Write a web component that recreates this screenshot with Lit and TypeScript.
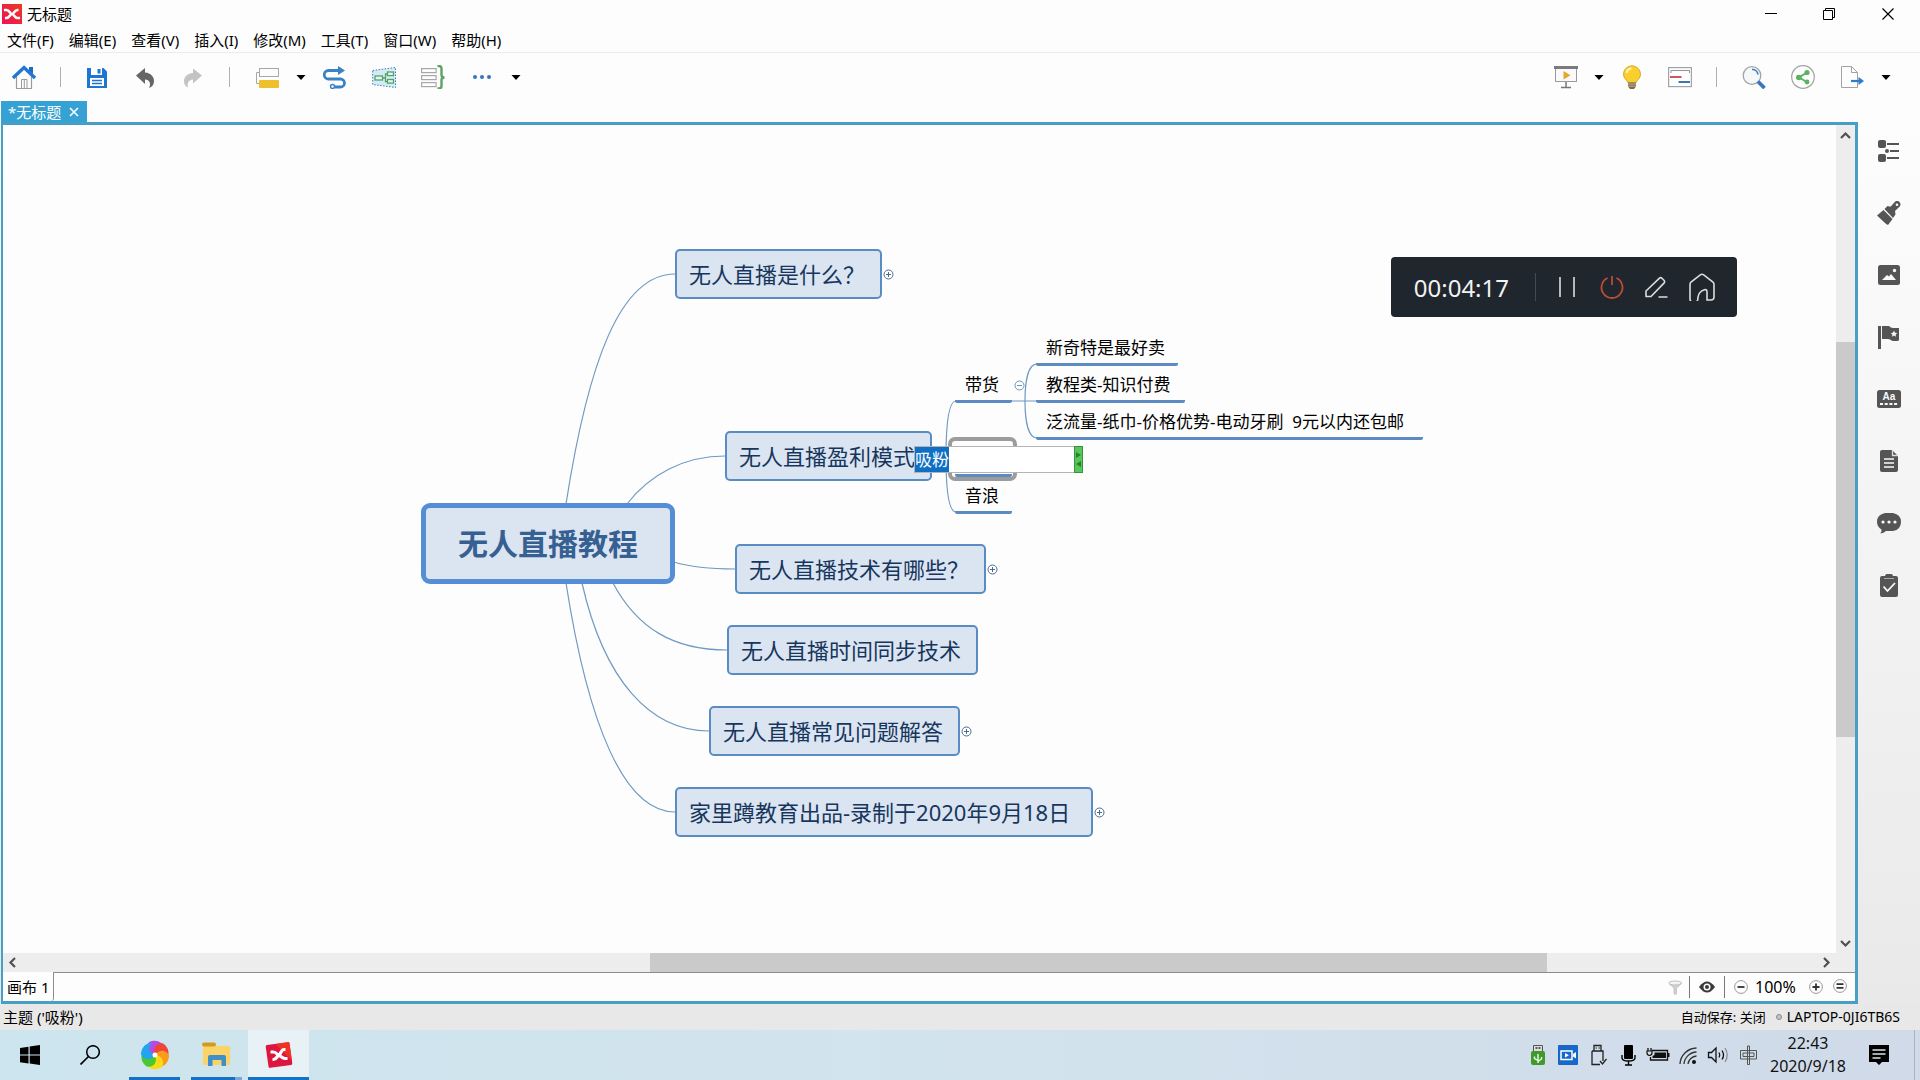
import { LitElement, html, svg, css, nothing, TemplateResult } from "lit";
import { customElement, property } from "lit/decorators.js";
import { styleMap } from "lit/directives/style-map.js";

const icon = (body: unknown, w = 24, h = 24) =>
  html`<svg width=${w} height=${h} viewBox="0 0 ${w} ${h}" fill="none" aria-hidden="true">${body}</svg>`;

const MENUS = ["文件(F)", "编辑(E)", "查看(V)", "插入(I)", "修改(M)", "工具(T)", "窗口(W)", "帮助(H)"];

/* ---------- toolbar icons ---------- */
const I = {
  logo: icon(svg`<defs><linearGradient id="lg" x1="0" y1="1" x2="1" y2="0"><stop offset="0" stop-color="#ef1158"/><stop offset="1" stop-color="#ea3a22"/></linearGradient></defs>
    <rect width="20" height="20" fill="url(#lg)"/>
    <path d="M2 6h2.500c3 0 3.500 4 5.500 4s2.500 4 5.500 4H18M16.500 6h-1c-3 0-3.500 4-5.500 4s-2.500 4-5.500 4H3" stroke="#fff" stroke-width="2.600"/>`, 20, 20),
  home: icon(svg`<path d="M4.500 12v11.500h15V12" stroke="#9b9b9b" stroke-width="1.200" fill="#fdfdfd"/><path d="M9.500 23.500V14.500h5.500v9M12.300 14.500v9" stroke="#9b9b9b"/>
    <path d="M17 2h4v7l-4-3z" fill="#1b6cc4"/><path d="M1 13 12 2.500 23 13" stroke="#2277cf" stroke-width="3.400"/>`),
  save: icon(svg`<path d="M2 3h16.500L22 6.500V23H2z" fill="#1d76d0"/><path d="M6 3h11v7H6z" fill="#fff"/><path d="M12.500 4h3v4.500h-3z" fill="#1d76d0"/><path d="M5 13h14v8H5z" fill="#fff"/><path d="M7 15.500h10M7 18.500h10" stroke="#1d76d0" stroke-width="1.400"/>`),
  undo: icon(svg`<path d="M3 10.500 12 3v4.500c6 .5 9 4.500 9 8.500 0 3.500-1.800 6-5 7 2-3.500 1.500-8-4-8.500V19z" fill="#666"/>`),
  redo: icon(svg`<path d="M21 10.500 12 3.500v4.500c-6 .5-9 4-9 8 0 3.500 1.500 5.500 4 6.500-1-4 0-7.500 5-8V18.500z" fill="#c3c3c3"/>`),
  topic: icon(svg`<rect x="4.500" y="3.500" width="19" height="8" fill="#fcfcfc" stroke="#a7a7a7"/><path d="M4 7.500H1.500v11H4" stroke="#a7a7a7"/><rect x="4" y="15" width="20" height="8" rx="1" fill="#eec02c"/>`),
  relation: icon(svg`<path d="M17 5.500H5.500a4.200 4.200 0 0 0 0 8.500h12a4 4 0 0 1 0 8h-6" stroke="#3b82c4" stroke-width="2.800"/><path d="m15 1 7 4.500-7 4.500z" fill="#3b82c4"/><circle cx="9.500" cy="21.500" r="2" fill="#fff" stroke="#3b82c4" stroke-width="1.500"/>`),
  boundary: icon(svg`<path d="M.7 5.500 23.500 2.500v20L.7 19.500z" fill="#d2ecf6" stroke="#3d7fb0" stroke-dasharray="1.500 1.500"/><g fill="#e7f7ee" stroke="#56a169" stroke-width="1.300"><rect x="3" y="11" width="7.500" height="4"/><rect x="15.500" y="7" width="6" height="3.600"/><rect x="15.500" y="14.500" width="6" height="3.600"/></g><path d="M10.500 13h3M15.500 9h-2v7.500h2" stroke="#56a169" stroke-width="1.300"/>`),
  summary: icon(svg`<g stroke="#a7a7a7" stroke-width="1.200" fill="#fdfdfd"><rect x=".6" y="3.600" width="14.500" height="4"/><rect x=".6" y="10.600" width="14.500" height="4"/><rect x=".6" y="17.600" width="14.500" height="4"/></g><path d="M16.500 1H18q2.500 0 2.500 2.500V10q0 2.500 3 2.500-3 0-3 2.500v6q0 2.500-2.500 2.500h-1.500" stroke="#5fa162" stroke-width="2.400"/>`),
  more: icon(svg`<g fill="#3277bd"><circle cx="5" cy="12" r="2"/><circle cx="12" cy="12" r="2"/><circle cx="19" cy="12" r="2"/></g>`),
  present: icon(svg`<rect x="1.500" y="3" width="21" height="13.500" fill="#fafafa" stroke="#9a9a9a"/><path d="M0 1h24v3H0z" fill="#7b7b7b"/><path d="m9.500 6 7 4.200-7 4.200z" fill="#e5a62e"/><path d="M12 17v5M7 22.500h10" stroke="#777" stroke-width="1.500"/>`),
  bulb: icon(svg`<path d="M12 .8a8.500 8.500 0 0 1 8.500 8.500c0 4-3 5-4.300 8.200H7.800C6.500 14.300 3.500 13.300 3.500 9.300A8.500 8.500 0 0 1 12 .8z" fill="#f9cf2e" stroke="#d9a927"/><path d="M6.500 8a5.500 5.500 0 0 1 5-4.500" stroke="#fdf0a8" stroke-width="2.400"/><path d="M8 17.500h8v4l-2 2.500h-4l-2-2.500z" fill="#7a6a50"/><path d="M8 19h8M8 21.200h8" stroke="#c6b68d"/>`),
  gantt: icon(svg`<rect x=".6" y="2.600" width="22.800" height="19" fill="#fdfdfd" stroke="#9fa3ab" stroke-width="1.200"/><path d="M3 8V5.500h18.500V8" stroke="#9b8f93"/><path d="M2 12h11.500" stroke="#cf5560" stroke-width="2"/><path d="M10.500 17h11.500" stroke="#3d75b5" stroke-width="2"/>`),
  search: icon(svg`<circle cx="10" cy="10.500" r="8.800" fill="#f5f8fb" stroke="#a3a3a3" stroke-width="1.300"/><path d="M10 4.200a6.500 6.500 0 0 1 6 5.500" stroke="#3b82c4" stroke-width="1.500"/><path d="m16 16.500 6.500 6.500" stroke="#3578be" stroke-width="3.800"/>`),
  share: icon(svg`<circle cx="12" cy="12" r="11.300" fill="#fdfdfd" stroke="#a3a3a3" stroke-width="1.200"/><path d="M16 7.500 8 12.500l8 4.500" stroke="#5cb25f" stroke-width="2"/><g fill="#5cb25f"><circle cx="16" cy="7.500" r="2.600"/><circle cx="7.800" cy="12.500" r="2.800"/><circle cx="16" cy="17" r="2.400"/></g>`),
  exportDoc: icon(svg`<path d="M1.500 1.500h10l6 6v15h-16zM11.500 1.500v6h6" fill="#fdfdfd" stroke="#a3a3a3"/><path d="M11 16h9" stroke="#2f7cc9" stroke-width="2.200"/><path d="m18.500 12 5.500 4-5.500 4z" fill="#2f7cc9"/>`),
  caret: icon(svg`<path d="M.5 0h9L5 5z" fill="#000"/>`, 10, 5),
};

const G = "#555";
const SIDE: [string, TemplateResult][] = [
  ["大纲", icon(svg`<g fill=${G}><rect x="1" y="1" width="8" height="8" rx="2"/><rect x="1" y="15" width="8" height="8" rx="2"/><circle cx="10" cy="12" r="2"/></g><path d="M10 5h12M13 12h9M10 19h12" stroke=${G} stroke-width="2"/>`)],
  ["格式", icon(svg`<path d="M0 14.500 6.500 9l9 9L11 24q-2-1-3.500-2.500L0 14.500zM7.500 8l3-3 3 .8L18 .8q2.500-2 4.500.2t.2 4.500L18 10l.5 3.500-2.500 3.500z" fill=${G}/><circle cx="20" cy="3.800" r="1.300" fill="#fafafa"/>`)],
  ["图片", icon(svg`<rect x="1" y="2" width="22" height="20" rx="2.500" fill=${G}/><path d="m5 17 5-5 2 1.500 2-2.500 5 6z" fill="#fafafa"/><circle cx="17.500" cy="7.500" r="1.700" fill="#fafafa"/>`)],
  ["图标", icon(svg`<path d="M1 1h3v23H1zM5 1h7q2 2.500 5 2h5v12.500q-4 1-7 .2-2-1.700-4-1.700H5z" fill=${G}/><path d="m17 5.500 1 2.200 2.300.2-1.700 1.600.5 2.300-2.100-1.200-2.100 1.200.5-2.300-1.700-1.600 2.300-.2z" fill="#fafafa"/>`)],
  ["标签", icon(svg`<rect x="0" y="3" width="24" height="18" rx="2.500" fill=${G}/><text x="12" y="13" text-anchor="middle" font-size="10" font-weight="700" font-family="Liberation Sans, sans-serif" fill="#fafafa">Aa</text><path d="M3 17h18" stroke="#fafafa" stroke-width="2" stroke-dasharray="3 1.700"/>`)],
  ["备注", icon(svg`<path d="M3 3q0-2 2-2h10l6 6v14q0 2-2 2H5q-2 0-2-2z" fill=${G}/><path d="M15.500 1v5.500H21" stroke="#ddd" stroke-width="1.300"/><path d="M7 10h10M7 14h10M7 18h10" stroke="#fafafa" stroke-width="1.400"/>`)],
  ["批注", icon(svg`<path d="M8 2h8q8 1.500 8 9t-8 9H9q-2 2-6 2.500 2-2 1.500-4Q0 16 0 11q0-7.500 8-9z" fill=${G}/><g fill="#fafafa"><circle cx="6" cy="11" r="1.600"/><circle cx="12" cy="11" r="1.600"/><circle cx="18" cy="11" r="1.600"/></g>`)],
  ["任务", icon(svg`<path d="M5 3h3q0-2 2-2h4q2 0 2 2h3q2 0 2 2v17q0 2-2 2H5q-2 0-2-2V5q0-2 2-2z" fill=${G}/><path d="M7 5.500h10" stroke="#aaa"/><path d="m6.500 13.500 4 4.500 7.500-8" stroke="#fafafa" stroke-width="1.800"/>`)],
];

/* ---------- mind map data, in sheet coordinates ---------- */
const VIEW = { x: 3, y: 125 };
const at = (x: number, y: number, w?: number) =>
  styleMap({ left: `${x - VIEW.x}px`, top: `${y - VIEW.y}px`, ...(w ? { width: `${w}px` } : {}) });

interface Topic { x: number; y: number; w: number; label: string; folded?: boolean }
const TOPICS: Topic[] = [
  { x: 675, y: 249, w: 207, label: "无人直播是什么？", folded: true },
  { x: 725, y: 431, w: 207, label: "无人直播盈利模式" },
  { x: 735, y: 544, w: 251, label: "无人直播技术有哪些？", folded: true },
  { x: 727, y: 625, w: 251, label: "无人直播时间同步技术" },
  { x: 709, y: 706, w: 251, label: "无人直播常见问题解答", folded: true },
  { x: 675, y: 787, w: 418, label: "家里蹲教育出品-录制于2020年9月18日", folded: true },
];
const SUBTOPICS: Topic[] = [
  { x: 955, y: 370, w: 57, label: "带货" },
  { x: 955, y: 444, w: 57, label: "" },
  { x: 955, y: 481, w: 57, label: "音浪" },
  { x: 1036, y: 333, w: 142, label: "新奇特是最好卖" },
  { x: 1036, y: 370, w: 149, label: "教程类-知识付费" },
  { x: 1036, y: 407, w: 387, label: "泛流量-纸巾-价格优势-电动牙刷  9元以内还包邮" },
];
const LINKS = [
  "M566 504C588 363 620 274 675 274",
  "M627 504C650 474 685 456 725 456",
  "M674 562C690 567 710 569 735 569",
  "M613 583C637 628 673 650 727 650",
  "M582 583C604 680 650 731 709 731",
  "M566 583C588 724 624 812 675 812",
  "M932 457H946M956 401C948 401 946 430 946 457S948 512 956 512",
  "M1011 401H1037M1037 364C1028 364 1025 382 1025 401S1028 438 1037 438",
];

@customElement("mind-map")
class MindMap extends LitElement {
  static styles = css`
    :host { display: block; position: relative; flex: 1; min-width: 0; overflow: hidden; background: #fdfdfd; }
    .links { position: absolute; inset: 0; width: 100%; height: 100%; }
    .topic, .sub, .root, .fold, .focus, .editor { position: absolute; box-sizing: border-box; }
    .topic, .sub { white-space: pre; }
    .topic { height: 50px; padding: 0 12px; border: 2px solid #5a8cc4; border-radius: 5px; background: #dbe5f1; color: #17365d; font-size: 22px; line-height: 46px; }
    .root { height: 81px; border: 5px solid #558ed5; border-radius: 9px; background: #dbe5f1; color: #376092; font-size: 30px; font-weight: 700; line-height: 72px; text-align: center; }
    .sub { height: 33px; padding-left: 10px; border-bottom: 3px solid #5b8bc0; border-radius: 0 0 2px 2px; color: #000; font-size: 17px; line-height: 30px; }
    .fold { width: 11px; height: 11px; padding: 0; border: 0; background: none; line-height: 0; }
    .fold svg { display: block; }
    .focus { height: 44px; border: 4px solid #9c9c9c; border-radius: 7px; }
    .editor { display: flex; height: 27px; border: 1px solid #b4b4b4; background: #fff; }
    .editor input { flex: 1; min-width: 0; height: 25px; padding: 0; border: 0; outline: 0; background: none; color: #000; font: inherit; font-size: 17px; line-height: 25px; }
    .editor input::selection { background: #0f6fc5; color: #fff; }
    .grip { display: flex; flex-direction: column; align-items: center; justify-content: center; width: 9px; margin: -1px; padding: 0; border: 1px solid #3a9140; background: #55c858; }
  `;
  firstUpdated() {
    const field = this.renderRoot.querySelector("input")!;
    field.focus();
    field.select();
  }
  fold(x: number, y: number, open: boolean) {
    const c = open ? "#6c93bd" : "#4b6a8f";
    return html`<button class="fold" aria-label=${open ? "折叠" : "展开"} style=${at(x, y)}>
      ${icon(svg`<circle cx="5.500" cy="5.500" r="4.500" fill="#fff" stroke=${c}/><path d=${open ? "M3 5.500h5" : "M3 5.500h5M5.500 3v5"} stroke=${c}/>`, 11, 11)}
    </button>`;
  }
  render() {
    return html`
      <svg class="links" fill="none" stroke="#6f9ac2" stroke-width="1.200" aria-hidden="true">
        <g transform="translate(${-VIEW.x} ${-VIEW.y})">${LINKS.map((d) => svg`<path d=${d}/>`)}</g>
      </svg>
      <div class="root" style=${at(421, 503, 254)}>无人直播教程</div>
      ${TOPICS.map((t) => html`<div class="topic" style=${at(t.x, t.y, t.w)}>${t.label}</div>
        ${t.folded ? this.fold(t.x + t.w + 1, t.y + 20, false) : nothing}`)}
      ${SUBTOPICS.map((t) => html`<div class="sub" style=${at(t.x, t.y, t.w)}>${t.label}</div>`)}
      ${this.fold(1014, 380, true)}
      <div class="focus" style=${at(948, 437, 69)}></div>
      <div class="editor" style=${at(914, 446, 169)}>
        <input aria-label="主题文本" .value=${"吸粉"} />
        <button class="grip" aria-label="调整宽度">${icon(svg`<path d="m1 5 5 3-5 3zM6 14l-5 3 5 3z" fill="#2f7d35"/>`, 7, 25)}</button>
      </div>`;
  }
}

@customElement("recorder-bar")
class RecorderBar extends LitElement {
  static styles = css`
    :host { display: flex; align-items: center; box-sizing: border-box; height: 60px; padding: 0 21px 0 23px; border-radius: 4px; background: #1f262d; color: #f2f2f2; }
    time { font-size: 24px; line-height: 32px; padding-top: 2px; }
    .line { width: 1px; height: 28px; margin: 0 17px 0 26px; background: #434a51; }
    .tools { display: flex; gap: 17px; }
    button { padding: 0; border: 0; background: none; line-height: 0; }
  `;
  render() {
    return html`<time>00:04:17</time><span class="line"></span>
      <div class="tools">
        <button aria-label="暂停">${icon(svg`<path d="M7 4v20M21 4v20" stroke="#dcdcdc" stroke-width="1.600"/>`, 28, 28)}</button>
        <button aria-label="停止">${icon(svg`<path d="M9.500 5a10.500 10.500 0 1 0 9 0" stroke="#bf4a36" stroke-width="1.800"/><path d="M14 3v9" stroke="#bf4a36" stroke-width="1.800"/>`, 28, 28)}</button>
        <button aria-label="画笔">${icon(svg`<path d="M3 23.500v-5.500L16.500 5.200q1.200-1 2.400 0l2.300 2.300q1 1.200 0 2.400L8 23.500zM15.500 24h9" stroke="#dcdcdc" stroke-width="1.600" stroke-linejoin="round"/>`, 28, 28)}</button>
        <button aria-label="主页">${icon(svg`<path d="M2 11.500q0-1.500 1-2.300l9.300-7.400q1.700-1.200 3.400 0L25 9.200q1 .8 1 2.300V24q0 3-3 3h-4v-8q0-3-2.500-2.200-6 2-6.500 7.500 0 4.700-2.500 4.700H5q-3 0-3-3z" stroke="#dcdcdc" stroke-width="1.600"/>`, 28, 28)}</button>
      </div>`;
  }
}

@customElement("task-bar")
class TaskBar extends LitElement {
  static styles = css`
    :host { display: flex; align-items: stretch; height: 50px; background: linear-gradient(90deg, #cde5ee, #d2e4ee 45%, #d0dae8); color: #111; }
    button { display: grid; place-items: center; padding: 0; border: 0; background: none; }
    .start { width: 60px; }
    .app { box-sizing: border-box; width: 51px; margin-left: 9px; border-top: 3px solid transparent; border-bottom: 3px solid #1173c5; }
    .app + .app { margin-left: 11px; }
    .app.stacked { border-image: linear-gradient(90deg, #1173c5 82%, #7aa8db 82%) 3; border-top-width: 0; padding-top: 3px; }
    .app.active { width: 61px; margin-left: 6px; border-top-color: #e8f2f6; background: #e8f2f6; }
    .tray { display: flex; gap: 6px; margin-left: auto; }
    .tray button { width: 24px; }
    .clock { display: flex; flex-direction: column; justify-content: center; width: 96px; text-align: center; font-size: 16px; line-height: 23px; }
    .notes { width: 58px; padding-right: 12px; }
    .desk { width: 5px; border-left: 1px solid #a9b3c0; }
  `;
  render() {
    const petals = ["#b44be8", "#f0453c", "#fb9a1c", "#f7dc18", "#4cc82e", "#1fa6ee"];
    return html`
      <button class="start" aria-label="开始">${icon(svg`<path d="M0 3 8.500 1.700V9.500H0zM9.700 1.500 20 0v9.500H9.700zM0 10.600h8.500v7.800L0 17.200zM9.700 10.600H20V20L9.700 18.600z" fill="#000"/>`, 20, 20)}</button>
      <button class="start" aria-label="搜索">${icon(svg`<circle cx="13" cy="7" r="6.300" stroke="#000" stroke-width="1.500"/><path d="M8.500 11.500.500 19.500" stroke="#000" stroke-width="1.700"/>`, 20, 20)}</button>
      <button class="app" aria-label="浏览器">${icon(svg`${petals.map((c, i) => svg`<path transform="rotate(${i * 60 - 10} 15 15)" d="M15 15C8 13 6 6 11 1.500 19-1 25 4 25 9 21 5 15 7 15 15z" fill=${c}/>`)}<circle cx="15" cy="15" r="2.500" fill="#fff"/>`, 30, 30)}</button>
      <button class="app stacked" aria-label="文件资源管理器">${icon(svg`<path d="M1 3q0-2 2-2h9l2 3h13q1 0 1 1v17q0 1-1 1H2q-1 0-1-1z" fill="#fbd467"/><rect x="0" y="0.500" width="14" height="4" rx="2" fill="#d19b1d"/><path d="M6 24v-9q0-2 2-2h14q2 0 2 2v9h-4.500v-6h-9v6z" fill="#3f8fc8"/>`, 29, 26)}</button>
      <button class="app active" aria-label="XMind">${icon(svg`<g transform="rotate(-8 14 14)"><rect x="2" y="2.500" width="24" height="23" rx="1.500" fill="#dd163f"/><path d="M12 2.500h12.500q1.500 0 1.500 1.500v17.500z" fill="#ee3324"/></g><path d="M5.500 11h3c3 0 3.500 3 5.500 3.500s3 3 6 3h2.500M20.500 8.500h-1.500c-3 0-3 4.500-5 5.500s-2.500 4.500-5.500 4.500H7.500" stroke="#fff" stroke-width="3.200"/>`, 28, 28)}</button>
      <div class="tray">
        <button aria-label="USB">${icon(svg`<path d="M7.500 2.500h9v6h-9z" fill="#ddd" stroke="#555"/><path d="M9.500 5h2M12.500 5h2" stroke="#333" stroke-width="1.500"/><rect x="5" y="8" width="14" height="14" rx="2" fill="#3f9a2b"/><path d="M12 20v-9M12 17.500l-3.500-2v-2M12 18.500l3.500-2.500v-2" stroke="#eaffea" stroke-width="1.400"/>`)}</button>
        <button aria-label="录屏">${icon(svg`<rect x="2" y="2" width="20" height="20" rx="1" fill="#1669c9"/><rect x="5" y="8" width="11" height="8.500" stroke="#fff" stroke-width="1.500"/><path d="m9 10 4 2.300L9 14.500zM17 11l3-2v6.500l-3-2z" fill="#fff"/>`)}</button>
        <button aria-label="弹出设备">${icon(svg`<path d="M8 8V2.500h7V8M6 8h11v10M14 21.500H6V8" stroke="#222" stroke-width="1.300"/><path d="M9.500 5h1.500M12.500 5H14" stroke="#222"/><path d="m14 18 2.500 3 4-5" stroke="#222" stroke-width="1.300"/>`)}</button>
        <button aria-label="麦克风">${icon(svg`<rect x="8" y="2" width="9" height="14" rx="1" fill="#000"/><path d="M6 12v3q0 3 6.500 3t6.500-3v-3M12.500 18v3.500M9 22h7" stroke="#000" stroke-width="1.400"/>`)}</button>
        <button aria-label="电池">${icon(svg`<path d="M6 7.500h15.500V17H4.500v-3" stroke="#111" stroke-width="1.300"/><path d="M8.500 9.500h11.500v5.500H6.500v-2l2-1zM22 10h1.500v4H22z" fill="#111"/><path d="M2 5v3M5 5v3" stroke="#111" stroke-width="1.300"/><path d="M1 8h5v2q0 2-2.500 2.500Q1 12 1 10z" stroke="#111" stroke-width="1.200"/>`)}</button>
        <button aria-label="网络">${icon(svg`<g stroke="#333" stroke-width="1.300"><path d="M4 21A17 17 0 0 1 20.500 5"/><path d="M8 21A13 13 0 0 1 20.500 9"/><path d="M12 21a9 9 0 0 1 8.500-8"/></g><circle cx="18" cy="19" r="2" fill="#111"/>`)}</button>
        <button aria-label="音量">${icon(svg`<path d="M2.500 9.500h3L10 5v14l-4.500-4.500h-3z" stroke="#111" stroke-width="1.300"/><path d="M13 9.500q1.500 2.500 0 5M16 7.500q3 4.500 0 9" stroke="#111" stroke-width="1.300"/><path d="M19 5q4.500 7 0 14" stroke="#888" stroke-width="1.200"/>`)}</button>
        <button aria-label="输入法">${icon(svg`<path d="M4.500 7.500h16v8.500h-16zM7 10h11v3.500H7zM11.500 3v18.500h2V3z" stroke="#555"/>`)}</button>
      </div>
      <div class="clock"><span>22:43</span><span>2020/9/18</span></div>
      <button class="notes" aria-label="通知">${icon(svg`<path d="M0 0h20v17h-7l-3 3-3-3H0z" fill="#000"/><path d="M3.500 5h13M3.500 9h13M3.500 13h8" stroke="#d8e2ec" stroke-width="1.300"/>`, 20, 20)}</button>
      <span class="desk"></span>`;
  }
}

@customElement("scroll-strip")
class ScrollStrip extends LitElement {
  @property({ type: Boolean, reflect: true }) vertical = false;
  @property({ type: Number }) before = 0;
  @property({ type: Number }) size = 0;
  static styles = css`
    :host { display: flex; height: 19px; background: #ededed; }
    :host([vertical]) { flex-direction: column; width: 19px; height: auto; }
    button { display: grid; place-items: center; width: 19px; height: 19px; padding: 0; border: 0; background: none; }
    .track { flex: 1; display: flex; flex-direction: inherit; }
    .thumb { background: #cacaca; }
  `;
  render() {
    const a = this.vertical ? "M1 9 5.500 4.500 10 9" : "M8 1 3.500 5.500 8 10";
    const b = this.vertical ? "M1 3 5.500 7.500 10 3" : "M4 1 8.500 5.500 4 10";
    const arrow = (d: string) => icon(svg`<path d=${d} stroke="#505050" stroke-width="2.200"/>`, 11, 11);
    return html`<button aria-label="向前滚动">${arrow(a)}</button>
      <div class="track"><span style=${styleMap({ flexBasis: `${this.before}%` })}></span><span class="thumb" style=${styleMap({ flexBasis: `${this.size}%` })}></span></div>
      <button aria-label="向后滚动">${arrow(b)}</button>`;
  }
}

@customElement("app-root")
class AppRoot extends LitElement {
  static styles = css`
    :host { display: flex; flex-direction: column; height: 100vh; background: #fdfdfd; color: #000; font-family: "Noto Sans", "Noto Sans CJK SC", sans-serif; font-size: 15px; line-height: 20px; overflow: hidden; }
    button { padding: 0; border: 0; background: none; color: inherit; font: inherit; line-height: inherit; }
    svg { display: block; }
    .title { display: flex; align-items: center; gap: 5px; height: 28px; padding: 0 2px; }
    .title .wins { display: flex; margin-left: auto; }
    .wins button { display: grid; place-items: center; width: 58px; height: 28px; }
    .wins button:last-child { width: 60px; }
    .menu { display: flex; gap: 15px; height: 24px; padding-left: 7px; border-bottom: 1px solid #ececec; align-items: center; }
    .tools { display: flex; align-items: center; height: 48px; padding: 0 29px 0 12px; }
    .group { display: flex; align-items: center; gap: 24px; }
    .group.wide { gap: 25px; padding-left: 25px; }
    .group.right { margin-left: auto; }
    .caret { width: 10px; margin: 0 -8px; }
    .caret:last-child { margin-right: 0; }
    .sep { width: 1px; height: 20px; background: #b0b0b0; }
    .tabs { display: flex; padding-left: 1px; }
    .tab { display: flex; align-items: center; gap: 8px; height: 21px; padding: 0 8px 0 7px; background: #35a2d3; color: #fff; }
    .main { display: flex; flex: 1; min-height: 0; background: linear-gradient(#fdfdfd, #f1f1f1 60%, #e9e9e9); }
    .frame { display: flex; flex-direction: column; flex: 1; min-width: 0; margin-left: 1px; border: 3px solid #469fc4; border-left-width: 2px; }
    .view { position: relative; display: flex; flex: 1; min-height: 0; }
    recorder-bar { position: absolute; top: 132px; right: 118px; }
    .hscroll { padding-right: 20px; background: #ededed; }
    .sheets { display: flex; align-items: stretch; height: 28px; border-top: 1px solid #8c8c8c; background: #fdfdfd; }
    .sheet { margin-top: -1px; padding: 0 4px; border-right: 1px solid #8c8c8c; border-bottom-right-radius: 3px; background: #fdfdfd; }
    .zoom { display: flex; align-items: center; margin-left: auto; padding-right: 8px; }
    .zoom .sep { height: 22px; margin: 0 9px; background: #777; }
    .zoom .filter + .sep { margin-left: 6px; }
    .zoom output { width: 61px; padding-left: 7px; box-sizing: border-box; font-size: 16px; }
    .zoom .fit { margin-left: 10px; }
    .side { display: flex; flex-direction: column; align-items: center; gap: 38px; width: 62px; padding-top: 17px; }
    .status { display: flex; align-items: center; height: 26px; padding: 0 20px 0 3px; background: #e8e8e8; }
    .status .save { margin-left: auto; font-size: 13px; }
    .status .dot { box-sizing: border-box; width: 6px; height: 6px; margin: 0 5px 0 10px; border: 1px solid #8b8b8b; border-radius: 50%; background: #c4c4c4; }
    .status .host { font-size: 14px; }
  `;
  tool(label: string, glyph: TemplateResult, cls = "") {
    return html`<button class=${cls} aria-label=${label}>${glyph}</button>`;
  }
  round(label: string, d: string) {
    return this.tool(label, icon(svg`<circle cx="7" cy="7" r="6.400" fill="#fdfdfd" stroke="#999"/><path d=${d} stroke="#333" stroke-width="1.800"/>`, 14, 14));
  }
  render() {
    const sep = html`<span class="sep"></span>`;
    const caret = this.tool("展开选项", I.caret, "caret");
    return html`
      <header class="title">${I.logo}<span>无标题</span>
        <div class="wins">
          ${this.tool("最小化", icon(svg`<path d="M0 5.500h12" stroke="#000"/>`, 12, 12))}
          ${this.tool("还原", icon(svg`<path d="M.5 2.500h9v9h-9zM2.500 2.500v-2h9v9h-2" stroke="#000"/>`, 12, 12))}
          ${this.tool("关闭", icon(svg`<path d="m.5.500 11 11m0-11-11 11" stroke="#000" stroke-width="1.200"/>`, 12, 12))}
        </div>
      </header>
      <nav class="menu">${MENUS.map((m) => html`<button>${m}</button>`)}</nav>
      <div class="tools">
        <div class="group">${this.tool("主页", I.home)}${sep}${this.tool("保存", I.save)}${this.tool("撤销", I.undo)}${this.tool("重做", I.redo)}${sep}</div>
        <div class="group wide">${this.tool("主题", I.topic)}${caret}${this.tool("联系", I.relation)}${this.tool("外框", I.boundary)}${this.tool("概要", I.summary)}${this.tool("更多", I.more)}${caret}</div>
        <div class="group right">${this.tool("演示", I.present)}${caret}${this.tool("头脑风暴", I.bulb)}${this.tool("甘特图", I.gantt)}${sep}</div>
        <div class="group wide">${this.tool("搜索", I.search)}${this.tool("分享", I.share)}${this.tool("导出", I.exportDoc)}${caret}</div>
      </div>
      <div class="tabs"><div class="tab"><span>*无标题</span>${this.tool("关闭标签", icon(svg`<path d="m1 1 8 8m0-8-8 8" stroke="#fff" stroke-width="1.600"/>`, 10, 10))}</div></div>
      <div class="main">
        <div class="frame">
          <div class="view"><mind-map></mind-map><scroll-strip vertical .before=${25} .size=${50}></scroll-strip><recorder-bar></recorder-bar></div>
          <scroll-strip class="hscroll" .before=${35} .size=${50}></scroll-strip>
          <div class="sheets"><button class="sheet">画布 1</button>
            <div class="zoom">
              ${this.tool("筛选", icon(svg`<path d="M1 3.500 6 8v6h2.500V8L13.500 3.500" fill="#d0d0d0" stroke="#c4c4c4"/><ellipse cx="7.200" cy="3" rx="6.300" ry="2" fill="#f4f4f4" stroke="#bdbdbd"/>`, 15, 15), "filter")}
              ${sep}${this.tool("显示", icon(svg`<path d="M0 6q8-11 16 0-8 11-16 0z" fill="#3a3a3a"/><circle cx="8" cy="6" r="3.500" fill="#fdfdfd"/><circle cx="8" cy="6" r="2" fill="#3a3a3a"/>`, 16, 12))}${sep}
              ${this.round("缩小", "M3.500 7h7")}<output>100%</output>${this.round("放大", "M3.500 7h7M7 3.500v7")}<span class="fit">${this.round("适应", "M3.500 5.200h7M3.500 8.800h7")}</span>
            </div>
          </div>
        </div>
        <aside class="side">${SIDE.map(([l, g]) => this.tool(l, g))}</aside>
      </div>
      <footer class="status"><span>主题 ('吸粉')</span><span class="save">自动保存: 关闭</span><span class="dot"></span><span class="host">LAPTOP-0JI6TB6S</span></footer>
      <task-bar></task-bar>`;
  }
}
